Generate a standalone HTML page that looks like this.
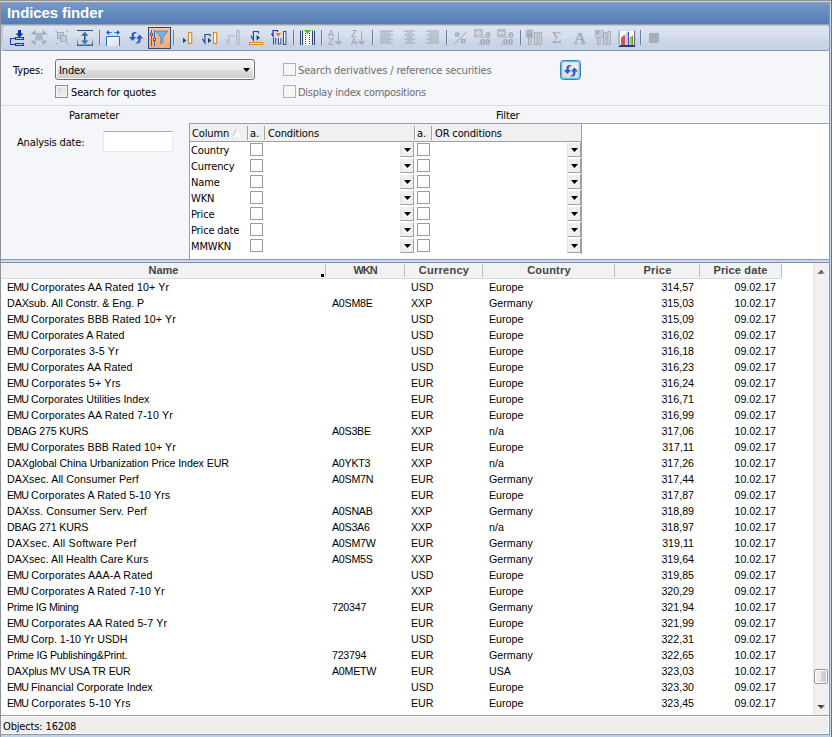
<!DOCTYPE html>
<html><head><meta charset="utf-8"><title>Indices finder</title>
<style>
html,body{margin:0;padding:0;}
body{width:832px;height:737px;overflow:hidden;position:relative;background:#c3d2e8;font-family:"DejaVu Sans Condensed","Liberation Sans",sans-serif;font-size:11px;color:#000;}
div,span,i{box-sizing:border-box;}
.abs{position:absolute;}
#frame-top0{left:0;top:0;width:832px;height:1px;background:#8f9398;}
#frame-top1{left:0;top:1px;width:832px;height:1px;background:#cbd4e2;}
#frame-top2{left:0;top:2px;width:832px;height:1px;background:#9a9ea5;}
#frame-left{left:0;top:2px;width:1px;height:735px;background:#8f9398;}
#title{left:1px;top:3px;width:829px;height:21px;background:linear-gradient(#7698c7,#537eb7);}
#title span{position:absolute;left:6px;top:1px;font:bold 15px/18px "Liberation Sans",sans-serif;color:#fff;white-space:nowrap;letter-spacing:-0.1px;}
#title-line{left:1px;top:24px;width:829px;height:1px;background:#9aa0aa;}
#tbwrap{left:1px;top:25px;width:829px;height:26px;background:linear-gradient(#b4c8e8,#bccde6);}
#toolbar{left:3px;top:26px;width:826px;height:25px;border-radius:3px;border-bottom:1px solid #8793a6;background:linear-gradient(#dfe5f0 0%,#d6deeb 45%,#cdd8e7 55%,#c4d1e4 100%);}
#form{left:1px;top:51px;width:829px;height:208px;background:#f5f6fa;}
.lbl{position:absolute;white-space:nowrap;line-height:13px;letter-spacing:-0.15px;font-family:"DejaVu Sans Condensed","DejaVu Sans","Liberation Sans",sans-serif;font-stretch:condensed;}
.dis{color:#6d6d6d;}
.cb{position:absolute;width:13px;height:13px;border:1px solid #8e8f8f;background:#f4f4f4;}
.cb i{position:absolute;left:1px;top:1px;width:9px;height:9px;border:1px solid #e9e9ea;background:linear-gradient(135deg,#d2d4d2,#f6f6f6);display:block;}
.cbd{position:absolute;width:13px;height:13px;border:1px solid #b1b1b1;background:#f6f6f6;}
.hline{position:absolute;height:1px;background:#d5dae4;}
#rows{left:1px;top:279px;width:813px;height:436px;background:#fff;font-family:"Liberation Sans",sans-serif;font-size:10.67px;}
.r{position:relative;height:16px;line-height:16px;white-space:nowrap;}
.r span{position:absolute;top:0;}
.c1{left:6px;}.c1 b{font-weight:normal;letter-spacing:-0.89px;}.c2{left:331px;letter-spacing:-0.25px;}.c3{left:410px;}.c4{left:488px;}
.c5{right:120px;}.c6{right:38px;}
.hd{position:absolute;top:263px;height:15px;background:#f1f2f4;font:bold 11px/15px "Liberation Sans",sans-serif;color:#444;text-align:center;}
.hd:after{content:"";position:absolute;right:0;top:1px;width:1px;height:13px;background:#bdbdbd;}
</style></head><body>
<div class="abs" id="frame-top0"></div><div class="abs" id="frame-top1"></div><div class="abs" id="frame-top2"></div>
<div class="abs" id="title"><span>Indices finder</span></div>
<div class="abs" id="title-line"></div>
<div class="abs" id="tbwrap"></div>
<div class="abs" id="toolbar"></div>
<div class="abs" id="form"></div>
<svg class="abs" style="left:0;top:25px" width="832" height="26" viewBox="0 25 832 26">
<defs><linearGradient id="og" x1="0" y1="0" x2="0" y2="1"><stop offset="0" stop-color="#f9c9a3"/><stop offset="1" stop-color="#f1a873"/></linearGradient><linearGradient id="wg" x1="0" y1="0" x2="1" y2="1"><stop offset="0" stop-color="#ffffff"/><stop offset="1" stop-color="#d4d9e4"/></linearGradient><linearGradient id="ag" x1="0" y1="0" x2="0" y2="1"><stop offset="0" stop-color="#4a8fc0"/><stop offset="0.5" stop-color="#24507f"/><stop offset="1" stop-color="#4a8fc0"/></linearGradient><linearGradient id="sg" x1="0" y1="0" x2="0" y2="1"><stop offset="0" stop-color="#c8daf4"/><stop offset="1" stop-color="#2c4c7c"/></linearGradient></defs>
<rect x="99" y="30" width="1" height="15" fill="#6b7b9b"/>
<rect x="100" y="30" width="1" height="15" fill="#e4eaf3" opacity="0.6"/>
<rect x="173" y="30" width="1" height="15" fill="#6b7b9b"/>
<rect x="174" y="30" width="1" height="15" fill="#e4eaf3" opacity="0.6"/>
<rect x="293" y="30" width="1" height="15" fill="#6b7b9b"/>
<rect x="294" y="30" width="1" height="15" fill="#e4eaf3" opacity="0.6"/>
<rect x="321" y="30" width="1" height="15" fill="#6b7b9b"/>
<rect x="322" y="30" width="1" height="15" fill="#e4eaf3" opacity="0.6"/>
<rect x="372" y="30" width="1" height="15" fill="#6b7b9b"/>
<rect x="373" y="30" width="1" height="15" fill="#e4eaf3" opacity="0.6"/>
<rect x="446" y="30" width="1" height="15" fill="#6b7b9b"/>
<rect x="447" y="30" width="1" height="15" fill="#e4eaf3" opacity="0.6"/>
<rect x="520" y="30" width="1" height="15" fill="#6b7b9b"/>
<rect x="521" y="30" width="1" height="15" fill="#e4eaf3" opacity="0.6"/>
<rect x="640" y="30" width="1" height="15" fill="#6b7b9b"/>
<rect x="641" y="30" width="1" height="15" fill="#e4eaf3" opacity="0.6"/>
<path d="M18 30h3v3.5h2.5L19.5 37.4L15.5 33.5H18z" fill="#0a32b4"/>
<path d="M15.5 38.5H10.5V44.5H15.5" fill="none" stroke="#0a32b4" stroke-width="1"/>
<rect x="15.5" y="37.5" width="8" height="2" fill="#a8d4fb" stroke="#0a3cc0" stroke-width="1"/>
<rect x="15.5" y="43.5" width="8" height="2" fill="#a8d4fb" stroke="#0a3cc0" stroke-width="1"/>
<rect x="35.3" y="32.8" width="7.4" height="7.6" fill="#b0b8c5"/>
<path d="M30.6 34.4L35.4 29.8v4.6zM42.6 29.8v4.6h4.8zM30.6 40.8h4.8v4.6zM42.6 40.8h4.8l-4.8 4.6z" fill="#9ea6b3"/>
<rect x="57.5" y="32.5" width="6" height="6" fill="#c3cad5" stroke="#a4acb9"/>
<rect x="60.5" y="35.5" width="6" height="6" fill="#c3cad5" stroke="#a4acb9"/>
<path d="M55.5 30.5l1.5 1.5M68 30.5l-1.5 1.5M55.5 44.5l1.5-1.5M68 44.5l-1.5-1.5" stroke="#a4acb9" stroke-width="1.2"/>
<rect x="77" y="30" width="16" height="1" fill="#2c4c7c"/>
<rect x="77" y="44.6" width="16" height="1.2" fill="#2c4c7c"/>
<rect x="77" y="37.5" width="1" height="8" fill="url(#sg)"/><rect x="92" y="37.5" width="1" height="8" fill="url(#sg)"/>
<path d="M84.8 31.4L88.4 35.8H85.6V40.6H88.4L84.8 44.4L81.2 40.6H84V35.8H81.2z" fill="url(#ag)"/>
<rect x="106.5" y="36.5" width="13" height="10" fill="url(#wg)" stroke="none"/>
<path d="M106.5 46V36.5H119.5V46" fill="none" stroke="#2a6cc8" stroke-width="1"/>
<path d="M106 32.5L109 30v2h2.5v1H109v2zM120 32.5L117 30v2h-2.5v1H117v2z" fill="#1f5fc0"/>
<path d="M129 37l3.6 4l3.6-4h-2.2v-2.2q0-1.6 1.8-1.6h0.6v-1.2h-1.4q-3.4 0-3.4 3v2z" fill="#2d5ccc"/><path d="M143.2 38.6l-3.6-4l-3.6 4h2.2v2.2q0 1.6-1.8 1.6h-0.6v1.2h1.4q3.4 0 3.4-3v-2z" fill="#2d5ccc"/>
<rect x="148.5" y="27.5" width="22" height="21" fill="url(#og)" stroke="#2f4a7a" stroke-width="1"/>
<rect x="151" y="30" width="1" height="16" fill="#2f6ad8"/><rect x="154" y="30" width="1" height="16" fill="#2f6ad8"/>
<rect x="150.5" y="33.5" width="2" height="2" fill="#fff" stroke="#2f6ad8"/>
<rect x="153.5" y="38.5" width="2" height="2" fill="#fff" stroke="#e8201a"/>
<path d="M155.5 31H168L163 37.2V42L160.8 44V37.2z" fill="#72b4ea" stroke="#3f79b0" stroke-width="0.7"/>
<path d="M183 37.7v5.5l3.3-2.75z" fill="#2a3f6a"/>
<rect x="188.5" y="32.5" width="3.2" height="11" fill="#fff" stroke="#e2851a" stroke-width="1.15"/>
<path d="M202.3 38.7l2.6 4.2V34.5H210v2" fill="none" stroke="#1f4f9f" stroke-width="1.2"/>
<path d="M208 37.8v5.5l3.3-2.75z" fill="#2a3f6a"/>
<rect x="213.5" y="32.5" width="3.2" height="11" fill="#fff" stroke="#e2851a" stroke-width="1.15"/>
<path d="M226.3 39.7l2.6 4.2V35.5H234v2" fill="none" stroke="#b4bcc8" stroke-width="1.2"/>
<rect x="236.5" y="30.5" width="2.6" height="14" fill="#cdd3dc" stroke="#b0b8c4"/>
<path d="M250.8 35.7l2.6 4.2V31.5H258.5v2" fill="none" stroke="#1f4f9f" stroke-width="1.2"/>
<path d="M256.6 35v5.5l3.3-2.75z" fill="#2a3f6a"/>
<rect x="249.5" y="42.5" width="13.2" height="2" fill="#fff" stroke="#e2851a" stroke-width="1.1"/>
<path d="M271.5 33.5l1.5 2.5V30.5h4.5v1.5" fill="none" stroke="#1a2fa0" stroke-width="1.2"/>
<path d="M275.6 33h5.6l-2.8 3.4z" fill="#e07818"/>
<rect x="273" y="38" width="1" height="6.5" fill="#2a4a8a"/><rect x="275.2" y="38" width="1" height="6.5" fill="#2a4a8a"/>
<path d="M278.5 38v6h2.4v-6" fill="#fff" stroke="#2a4a8a"/>
<rect x="283.5" y="31.5" width="2.4" height="13" fill="#fff" stroke="#2a4a8a"/>
<rect x="303.5" y="30" width="8" height="15" fill="#fff"/>
<rect x="300" y="30.5" width="1" height="14.5" fill="#2f446c"/>
<rect x="302" y="30.5" width="1" height="14.5" fill="#2f446c"/>
<rect x="312" y="30.5" width="1" height="14.5" fill="#2f446c"/>
<rect x="314" y="30.5" width="1" height="14.5" fill="#2f446c"/>
<path d="M305.5 33V45" stroke="#2f446c" stroke-width="1" stroke-dasharray="1 1"/>
<path d="M309.5 33V45" stroke="#2f446c" stroke-width="1" stroke-dasharray="1 1"/>
<path d="M303.5 30h8L307.5 34z" fill="#4cc21a"/>
<text x="330.8" y="36.6" font-family="Liberation Mono,monospace" font-size="10.5" fill="#9ca5b2" text-anchor="middle">A</text><text x="330.8" y="44.7" font-family="Liberation Mono,monospace" font-size="10.5" fill="#9ca5b2" text-anchor="middle">Z</text><path d="M338 31h1V41.2h3.4l-3.9 4l-3.9-4h3.4z" fill="#a4acb9"/>
<text x="353.8" y="36.6" font-family="Liberation Mono,monospace" font-size="10.5" fill="#9ca5b2" text-anchor="middle">Z</text><text x="353.8" y="44.7" font-family="Liberation Mono,monospace" font-size="10.5" fill="#9ca5b2" text-anchor="middle">A</text><path d="M361 31h1V41.2h3.4l-3.9 4l-3.9-4h3.4z" fill="#a4acb9"/>
<rect x="380" y="30.6" width="13" height="1" fill="#9fa8b5"/><rect x="380" y="32.6" width="10.5" height="1" fill="#9fa8b5"/><rect x="380" y="34.6" width="13" height="1" fill="#9fa8b5"/><rect x="380" y="36.6" width="10.5" height="1" fill="#9fa8b5"/><rect x="380" y="38.6" width="13" height="1" fill="#9fa8b5"/><rect x="380" y="40.6" width="10.5" height="1" fill="#9fa8b5"/><rect x="380" y="42.6" width="13" height="1" fill="#9fa8b5"/>
<rect x="404" y="30.6" width="11" height="1" fill="#9fa8b5"/><rect x="406.75" y="32.6" width="5.5" height="1" fill="#9fa8b5"/><rect x="404" y="34.6" width="11" height="1" fill="#9fa8b5"/><rect x="406.75" y="36.6" width="5.5" height="1" fill="#9fa8b5"/><rect x="404" y="38.6" width="11" height="1" fill="#9fa8b5"/><rect x="406.75" y="40.6" width="5.5" height="1" fill="#9fa8b5"/><rect x="404" y="42.6" width="11" height="1" fill="#9fa8b5"/>
<rect x="426" y="30.6" width="13" height="1" fill="#9fa8b5"/><rect x="429" y="32.6" width="10" height="1" fill="#9fa8b5"/><rect x="426" y="34.6" width="13" height="1" fill="#9fa8b5"/><rect x="429" y="36.6" width="10" height="1" fill="#9fa8b5"/><rect x="426" y="38.6" width="13" height="1" fill="#9fa8b5"/><rect x="429" y="40.6" width="10" height="1" fill="#9fa8b5"/><rect x="426" y="42.6" width="13" height="1" fill="#9fa8b5"/>
<path d="M454 44.3L466.6 32" stroke="#99a2af" stroke-width="1"/>
<rect x="455.8" y="33.2" width="2.8" height="2.8" fill="none" stroke="#9ca5b2" stroke-width="1.25"/>
<rect x="461.8" y="39.6" width="2.8" height="2.8" fill="none" stroke="#9ca5b2" stroke-width="1.25"/>
<rect x="474" y="29" width="9" height="8.4" fill="#b5bdc9"/><path d="M475.4 32.3h2.2v-2.2h1.8v2.2h2.2v1.8h-2.2v2.2h-1.8v-2.2h-2.2z" fill="#d4dae3"/><text x="482.6" y="37.6" font-family="Liberation Serif,serif" font-weight="bold" font-size="8.4" fill="#9aa3b0" textLength="7.6" lengthAdjust="spacingAndGlyphs">.0</text><text x="477.2" y="45.2" font-family="Liberation Serif,serif" font-weight="bold" font-size="8.4" fill="#9aa3b0" textLength="13" lengthAdjust="spacingAndGlyphs">.00</text>
<rect x="497" y="29" width="9" height="8.4" fill="#b5bdc9"/><rect x="498.5" y="32" width="6" height="2" fill="#d4dae3"/><text x="505.6" y="37.6" font-family="Liberation Serif,serif" font-weight="bold" font-size="8.4" fill="#9aa3b0" textLength="7.6" lengthAdjust="spacingAndGlyphs">.0</text><text x="500.2" y="45.2" font-family="Liberation Serif,serif" font-weight="bold" font-size="8.4" fill="#9aa3b0" textLength="13" lengthAdjust="spacingAndGlyphs">.00</text>
<rect x="525.5" y="29.5" width="8" height="8.5" fill="#bcc3ce"/>
<path d="M527.8 33.5v-1.6q0-1.6 1.7-1.6t1.7 1.6v1.6" fill="none" stroke="#a0a8b5" stroke-width="1.1"/>
<rect x="527" y="33.3" width="5" height="3.8" fill="#a0a8b5"/>
<rect x="528.5" y="38" width="2.6" height="6.5" fill="#ccd2dc" stroke="#a4acb9"/>
<rect x="534.5" y="32.5" width="2.6" height="12" fill="#ccd2dc" stroke="#a4acb9"/>
<rect x="539" y="32.5" width="2.6" height="12" fill="#ccd2dc" stroke="#a4acb9"/>
<text x="556.8" y="43.4" font-family="Liberation Serif,serif" font-size="16.5" fill="#a4acb9" text-anchor="middle" textLength="10" lengthAdjust="spacingAndGlyphs">Σ</text>
<text x="580" y="43.6" font-family="Liberation Serif,serif" font-weight="bold" font-size="17" fill="#a4acb9" text-anchor="middle" stroke="#a4acb9" stroke-width="0.3">A</text>
<rect x="594.8" y="29.8" width="9" height="8.4" fill="#b5bdc9"/>
<rect x="596" y="31" width="3" height="3" fill="#a4acb9"/><rect x="599.6" y="31" width="3" height="3" fill="#c9cfd9"/><rect x="596" y="34.6" width="6.6" height="2.6" fill="#c3cad5"/>
<rect x="597.5" y="38" width="2.6" height="6.5" fill="#ccd2dc" stroke="#a4acb9"/>
<rect x="603.5" y="32.5" width="2.6" height="12" fill="#ccd2dc" stroke="#a4acb9"/>
<rect x="607.8" y="31.5" width="2.6" height="13" fill="#ccd2dc" stroke="#a4acb9"/>
<rect x="618" y="30" width="17" height="17" fill="#fff"/>
<rect x="618" y="30" width="2" height="15.5" fill="#a9b6d6"/>
<path d="M618 47l2-2H635V47z" fill="#2c3f80"/>
<rect x="634.2" y="30.5" width="0.9" height="16" fill="#3a4a80"/>
<rect x="618" y="30" width="17" height="0.8" fill="#c5cfe4"/>
<path d="M621 37.5l3-2.5l1 0.5V45h-4z" fill="#d4524e"/><path d="M621 37.5l3-2.5l1 .5l-3 2.3z" fill="#e88a84"/>
<path d="M625.4 34l2.6-2.6l1 .6V45h-3.6z" fill="#bcc4ec"/><path d="M628 31.4l1 .6V45h-1z" fill="#3c52c4"/>
<path d="M629.4 38l2.6-2.5l1 .5V45h-3.6z" fill="#a9bc44"/><path d="M632 35.500l1 .5V45h-1z" fill="#7d8f1e"/>
<rect x="649" y="33" width="10" height="10" rx="0.8" fill="#a7afba"/>
</svg>
<div class="abs" style="left:560px;top:60px;width:21px;height:20px;border:1px solid #3c7fb1;border-radius:3.5px;background:linear-gradient(#f0eeee,#dcdcdc);box-shadow:inset 0 0 0 1.3px #46d0f4;"></div>
<svg class="abs" style="left:560px;top:60px" width="21" height="20" viewBox="560 60 21 20"><path d="M563.8 70l3.6 4l3.6-4h-2.2v-2.2q0-1.6 1.8-1.6h0.6v-1.2h-1.4q-3.4 0-3.4 3v2z" fill="#2d5ccc"/><path d="M578 71.6l-3.6-4l-3.6 4h2.2v2.2q0 1.6-1.8 1.6h-0.6v1.2h1.4q3.4 0 3.4-3v-2z" fill="#2d5ccc"/></svg>
<!-- form content -->
<div class="lbl" style="left:13px;top:64px;">Types:</div>
<div class="abs" id="sel" style="left:55px;top:59px;width:200px;height:21px;border:1px solid #707070;border-radius:3px;background:linear-gradient(#f2f2f2 0%,#ebebeb 50%,#dddddd 50%,#cfcfcf 100%);box-shadow:inset 0 0 0 1px #fcfcfc;"></div>
<div class="lbl" style="left:59px;top:64px;">Index</div>
<svg class="abs" style="left:243px;top:68px" width="7" height="4"><path d="M0 0h7L3.5 4z" fill="#000"/></svg>
<div class="cb" style="left:55px;top:85px;"><i></i></div>
<div class="lbl" style="left:71px;top:86px;">Search for quotes</div>
<div class="cbd" style="left:283px;top:63px;"></div>
<div class="lbl dis" style="left:298px;top:64px;">Search derivatives / reference securities</div>
<div class="cbd" style="left:283px;top:85px;"></div>
<div class="lbl dis" style="left:298px;top:86px;letter-spacing:-0.29px;">Display index compositions</div>
<div class="hline" style="left:1px;top:105px;width:829px;"></div>
<div class="lbl" style="left:69px;top:109px;">Parameter</div>
<div class="lbl" style="left:496px;top:109px;">Filter</div>
<div class="lbl" style="left:17px;top:136px;">Analysis date:</div>
<div class="abs" style="left:103px;top:131px;width:70px;height:21px;border:1px solid #e3e9ef;border-top-color:#abadb3;background:#fff;border-radius:1px;"></div>
<div class="abs" style="left:189px;top:123px;width:641px;height:136px;background:#fff;"></div>
<div class="abs" style="left:189px;top:123px;width:393px;height:136px;border:1px solid #a0a0a0;border-bottom:none;border-right:none;"></div>
<div class="abs" style="left:189px;top:123px;width:640px;height:1px;background:#a0a0a0;"></div>
<div class="abs" style="left:190px;top:124px;width:391px;height:17px;background:#f0f0f0;"></div>
<div class="abs" style="left:190px;top:141px;width:392px;height:1px;background:#a0a0a0;"></div>
<div class="abs" style="left:581px;top:123px;width:1px;height:131px;background:#a0a0a0;"></div>
<div class="abs" style="left:247px;top:126px;width:1px;height:14px;background:#a0a0a0;"></div>
<div class="abs" style="left:248px;top:126px;width:1px;height:14px;background:#fff;"></div>
<div class="abs" style="left:264px;top:126px;width:1px;height:14px;background:#a0a0a0;"></div>
<div class="abs" style="left:265px;top:126px;width:1px;height:14px;background:#fff;"></div>
<div class="abs" style="left:414px;top:126px;width:1px;height:14px;background:#a0a0a0;"></div>
<div class="abs" style="left:415px;top:126px;width:1px;height:14px;background:#fff;"></div>
<div class="abs" style="left:431px;top:126px;width:1px;height:14px;background:#a0a0a0;"></div>
<div class="abs" style="left:432px;top:126px;width:1px;height:14px;background:#fff;"></div>
<div class="lbl" style="left:192px;top:127px;">Column</div>
<svg class="abs" style="left:232px;top:129px" width="10" height="8"><path d="M0.5 7.5L4.5 0.5L8.5 7.5z" fill="#fdfdfd" stroke="#fff" stroke-width="1"/><path d="M0.5 7.5L4.5 0.5" fill="none" stroke="#b4b4b4" stroke-width="1"/></svg>
<div class="lbl" style="left:250px;top:127px;width:13px;overflow:hidden;">a.<span style="color:#c8c8c8">.</span></div>
<div class="lbl" style="left:268px;top:127px;">Conditions</div>
<div class="lbl" style="left:417px;top:127px;width:13px;overflow:hidden;">a.<span style="color:#c8c8c8">.</span></div>
<div class="lbl" style="left:435px;top:127px;">OR conditions</div>
<div class="lbl" style="left:191px;top:144px;">Country</div>
<div class="abs" style="left:250px;top:143px;width:13px;height:13px;border:1px solid #999a9a;background:#fff;"></div>
<div class="abs" style="left:417px;top:143px;width:13px;height:13px;border:1px solid #999a9a;background:#fff;"></div>
<div class="abs" style="left:400px;top:142px;width:14px;height:15px;background:#f0f0f0;border-left:1px solid #e3e3e3;border-top:1px solid #fff;border-right:1px solid #a0a0a0;border-bottom:1px solid #a0a0a0;"></div>
<svg class="abs" style="left:404px;top:148px" width="7" height="4"><path d="M0 0h7L3.5 4z" fill="#000"/></svg>
<div class="abs" style="left:567px;top:142px;width:14px;height:15px;background:#f0f0f0;border-left:1px solid #e3e3e3;border-top:1px solid #fff;border-right:1px solid #a0a0a0;border-bottom:1px solid #a0a0a0;"></div>
<svg class="abs" style="left:571px;top:148px" width="7" height="4"><path d="M0 0h7L3.5 4z" fill="#000"/></svg>
<div class="lbl" style="left:191px;top:160px;">Currency</div>
<div class="abs" style="left:250px;top:159px;width:13px;height:13px;border:1px solid #999a9a;background:#fff;"></div>
<div class="abs" style="left:417px;top:159px;width:13px;height:13px;border:1px solid #999a9a;background:#fff;"></div>
<div class="abs" style="left:400px;top:158px;width:14px;height:15px;background:#f0f0f0;border-left:1px solid #e3e3e3;border-top:1px solid #fff;border-right:1px solid #a0a0a0;border-bottom:1px solid #a0a0a0;"></div>
<svg class="abs" style="left:404px;top:164px" width="7" height="4"><path d="M0 0h7L3.5 4z" fill="#000"/></svg>
<div class="abs" style="left:567px;top:158px;width:14px;height:15px;background:#f0f0f0;border-left:1px solid #e3e3e3;border-top:1px solid #fff;border-right:1px solid #a0a0a0;border-bottom:1px solid #a0a0a0;"></div>
<svg class="abs" style="left:571px;top:164px" width="7" height="4"><path d="M0 0h7L3.5 4z" fill="#000"/></svg>
<div class="lbl" style="left:191px;top:176px;">Name</div>
<div class="abs" style="left:250px;top:175px;width:13px;height:13px;border:1px solid #999a9a;background:#fff;"></div>
<div class="abs" style="left:417px;top:175px;width:13px;height:13px;border:1px solid #999a9a;background:#fff;"></div>
<div class="abs" style="left:400px;top:174px;width:14px;height:15px;background:#f0f0f0;border-left:1px solid #e3e3e3;border-top:1px solid #fff;border-right:1px solid #a0a0a0;border-bottom:1px solid #a0a0a0;"></div>
<svg class="abs" style="left:404px;top:180px" width="7" height="4"><path d="M0 0h7L3.5 4z" fill="#000"/></svg>
<div class="abs" style="left:567px;top:174px;width:14px;height:15px;background:#f0f0f0;border-left:1px solid #e3e3e3;border-top:1px solid #fff;border-right:1px solid #a0a0a0;border-bottom:1px solid #a0a0a0;"></div>
<svg class="abs" style="left:571px;top:180px" width="7" height="4"><path d="M0 0h7L3.5 4z" fill="#000"/></svg>
<div class="lbl" style="left:191px;top:192px;">WKN</div>
<div class="abs" style="left:250px;top:191px;width:13px;height:13px;border:1px solid #999a9a;background:#fff;"></div>
<div class="abs" style="left:417px;top:191px;width:13px;height:13px;border:1px solid #999a9a;background:#fff;"></div>
<div class="abs" style="left:400px;top:190px;width:14px;height:15px;background:#f0f0f0;border-left:1px solid #e3e3e3;border-top:1px solid #fff;border-right:1px solid #a0a0a0;border-bottom:1px solid #a0a0a0;"></div>
<svg class="abs" style="left:404px;top:196px" width="7" height="4"><path d="M0 0h7L3.5 4z" fill="#000"/></svg>
<div class="abs" style="left:567px;top:190px;width:14px;height:15px;background:#f0f0f0;border-left:1px solid #e3e3e3;border-top:1px solid #fff;border-right:1px solid #a0a0a0;border-bottom:1px solid #a0a0a0;"></div>
<svg class="abs" style="left:571px;top:196px" width="7" height="4"><path d="M0 0h7L3.5 4z" fill="#000"/></svg>
<div class="lbl" style="left:191px;top:208px;">Price</div>
<div class="abs" style="left:250px;top:207px;width:13px;height:13px;border:1px solid #999a9a;background:#fff;"></div>
<div class="abs" style="left:417px;top:207px;width:13px;height:13px;border:1px solid #999a9a;background:#fff;"></div>
<div class="abs" style="left:400px;top:206px;width:14px;height:15px;background:#f0f0f0;border-left:1px solid #e3e3e3;border-top:1px solid #fff;border-right:1px solid #a0a0a0;border-bottom:1px solid #a0a0a0;"></div>
<svg class="abs" style="left:404px;top:212px" width="7" height="4"><path d="M0 0h7L3.5 4z" fill="#000"/></svg>
<div class="abs" style="left:567px;top:206px;width:14px;height:15px;background:#f0f0f0;border-left:1px solid #e3e3e3;border-top:1px solid #fff;border-right:1px solid #a0a0a0;border-bottom:1px solid #a0a0a0;"></div>
<svg class="abs" style="left:571px;top:212px" width="7" height="4"><path d="M0 0h7L3.5 4z" fill="#000"/></svg>
<div class="lbl" style="left:191px;top:224px;">Price date</div>
<div class="abs" style="left:250px;top:223px;width:13px;height:13px;border:1px solid #999a9a;background:#fff;"></div>
<div class="abs" style="left:417px;top:223px;width:13px;height:13px;border:1px solid #999a9a;background:#fff;"></div>
<div class="abs" style="left:400px;top:222px;width:14px;height:15px;background:#f0f0f0;border-left:1px solid #e3e3e3;border-top:1px solid #fff;border-right:1px solid #a0a0a0;border-bottom:1px solid #a0a0a0;"></div>
<svg class="abs" style="left:404px;top:228px" width="7" height="4"><path d="M0 0h7L3.5 4z" fill="#000"/></svg>
<div class="abs" style="left:567px;top:222px;width:14px;height:15px;background:#f0f0f0;border-left:1px solid #e3e3e3;border-top:1px solid #fff;border-right:1px solid #a0a0a0;border-bottom:1px solid #a0a0a0;"></div>
<svg class="abs" style="left:571px;top:228px" width="7" height="4"><path d="M0 0h7L3.5 4z" fill="#000"/></svg>
<div class="lbl" style="left:191px;top:240px;">MMWKN</div>
<div class="abs" style="left:250px;top:239px;width:13px;height:13px;border:1px solid #999a9a;background:#fff;"></div>
<div class="abs" style="left:417px;top:239px;width:13px;height:13px;border:1px solid #999a9a;background:#fff;"></div>
<div class="abs" style="left:400px;top:238px;width:14px;height:15px;background:#f0f0f0;border-left:1px solid #e3e3e3;border-top:1px solid #fff;border-right:1px solid #a0a0a0;border-bottom:1px solid #a0a0a0;"></div>
<svg class="abs" style="left:404px;top:244px" width="7" height="4"><path d="M0 0h7L3.5 4z" fill="#000"/></svg>
<div class="abs" style="left:567px;top:238px;width:14px;height:15px;background:#f0f0f0;border-left:1px solid #e3e3e3;border-top:1px solid #fff;border-right:1px solid #a0a0a0;border-bottom:1px solid #a0a0a0;"></div>
<svg class="abs" style="left:571px;top:244px" width="7" height="4"><path d="M0 0h7L3.5 4z" fill="#000"/></svg>
<!-- splitter -->
<div class="abs" style="left:1px;top:259px;width:829px;height:1px;background:#8c98ad;"></div>
<div class="abs" style="left:1px;top:260px;width:829px;height:2px;background:#cbd9ec;"></div>
<div class="abs" style="left:1px;top:262px;width:829px;height:1px;background:#8291a8;"></div>
<!-- grid -->
<div class="abs" style="left:1px;top:263px;width:813px;height:16px;background:#fff;"></div>
<div class="abs" style="left:1px;top:278px;width:781px;height:1px;background:#d9d9d9;"></div>
<div class="hd" style="left:1px;width:325px;">Name</div>
<div class="hd" style="left:326px;width:79px;letter-spacing:-1.1px;text-indent:-1px;">WKN</div>
<div class="hd" style="left:405px;width:78px;letter-spacing:0.26px;">Currency</div>
<div class="hd" style="left:483px;width:132px;letter-spacing:0.22px;">Country</div>
<div class="hd" style="left:615px;width:85px;letter-spacing:0.25px;">Price</div>
<div class="hd" style="left:700px;width:82px;letter-spacing:0.15px;text-indent:-1px;">Price date</div>
<div class="abs" style="left:320px;top:273px;width:4px;height:4px;background:#fff;"></div><div class="abs" style="left:321px;top:274px;width:3px;height:3px;background:#000;"></div>
<div class="abs" id="rows">
<div class="r"><span class="c1" style="letter-spacing:0.137px"><b>EMU</b> Corporates AA Rated 10+ Yr</span><span class="c2"></span><span class="c3">USD</span><span class="c4">Europe</span><span class="c5">314,57</span><span class="c6">09.02.17</span></div>
<div class="r"><span class="c1" style="letter-spacing:-0.034px">DAXsub. All Constr. &amp; Eng. P</span><span class="c2">A0SM8E</span><span class="c3">XXP</span><span class="c4">Germany</span><span class="c5">315,03</span><span class="c6">10.02.17</span></div>
<div class="r"><span class="c1" style="letter-spacing:0.069px"><b>EMU</b> Corporates BBB Rated 10+ Yr</span><span class="c2"></span><span class="c3">USD</span><span class="c4">Europe</span><span class="c5">315,09</span><span class="c6">09.02.17</span></div>
<div class="r"><span class="c1" style="letter-spacing:0.023px"><b>EMU</b> Corporates A Rated</span><span class="c2"></span><span class="c3">USD</span><span class="c4">Europe</span><span class="c5">316,02</span><span class="c6">09.02.17</span></div>
<div class="r"><span class="c1" style="letter-spacing:0.189px"><b>EMU</b> Corporates 3-5 Yr</span><span class="c2"></span><span class="c3">USD</span><span class="c4">Europe</span><span class="c5">316,18</span><span class="c6">09.02.17</span></div>
<div class="r"><span class="c1" style="letter-spacing:0.069px"><b>EMU</b> Corporates AA Rated</span><span class="c2"></span><span class="c3">USD</span><span class="c4">Europe</span><span class="c5">316,23</span><span class="c6">09.02.17</span></div>
<div class="r"><span class="c1" style="letter-spacing:0.185px"><b>EMU</b> Corporates 5+ Yrs</span><span class="c2"></span><span class="c3">EUR</span><span class="c4">Europe</span><span class="c5">316,24</span><span class="c6">09.02.17</span></div>
<div class="r"><span class="c1" style="letter-spacing:-0.024px"><b>EMU</b> Corporates Utilities Index</span><span class="c2"></span><span class="c3">EUR</span><span class="c4">Europe</span><span class="c5">316,71</span><span class="c6">09.02.17</span></div>
<div class="r"><span class="c1" style="letter-spacing:0.144px"><b>EMU</b> Corporates AA Rated 7-10 Yr</span><span class="c2"></span><span class="c3">EUR</span><span class="c4">Europe</span><span class="c5">316,99</span><span class="c6">09.02.17</span></div>
<div class="r"><span class="c1" style="letter-spacing:-0.185px">DBAG 275 KURS</span><span class="c2">A0S3BE</span><span class="c3">XXP</span><span class="c4">n/a</span><span class="c5">317,06</span><span class="c6">10.02.17</span></div>
<div class="r"><span class="c1" style="letter-spacing:0.072px"><b>EMU</b> Corporates BBB Rated 10+ Yr</span><span class="c2"></span><span class="c3">EUR</span><span class="c4">Europe</span><span class="c5">317,11</span><span class="c6">09.02.17</span></div>
<div class="r"><span class="c1" style="letter-spacing:-0.085px">DAXglobal China Urbanization Price Index EUR</span><span class="c2">A0YKT3</span><span class="c3">XXP</span><span class="c4">n/a</span><span class="c5">317,26</span><span class="c6">10.02.17</span></div>
<div class="r"><span class="c1" style="letter-spacing:0.056px">DAXsec. All Consumer Perf</span><span class="c2">A0SM7N</span><span class="c3">EUR</span><span class="c4">Germany</span><span class="c5">317,44</span><span class="c6">10.02.17</span></div>
<div class="r"><span class="c1" style="letter-spacing:0.117px"><b>EMU</b> Corporates A Rated 5-10 Yrs</span><span class="c2"></span><span class="c3">EUR</span><span class="c4">Europe</span><span class="c5">317,87</span><span class="c6">09.02.17</span></div>
<div class="r"><span class="c1" style="letter-spacing:0.104px">DAXss. Consumer Serv. Perf</span><span class="c2">A0SNAB</span><span class="c3">XXP</span><span class="c4">Germany</span><span class="c5">318,89</span><span class="c6">10.02.17</span></div>
<div class="r"><span class="c1" style="letter-spacing:-0.185px">DBAG 271 KURS</span><span class="c2">A0S3A6</span><span class="c3">XXP</span><span class="c4">n/a</span><span class="c5">318,97</span><span class="c6">10.02.17</span></div>
<div class="r"><span class="c1" style="letter-spacing:0.248px">DAXsec. All Software Perf</span><span class="c2">A0SM7W</span><span class="c3">EUR</span><span class="c4">Germany</span><span class="c5">319,11</span><span class="c6">10.02.17</span></div>
<div class="r"><span class="c1" style="letter-spacing:0.034px">DAXsec. All Health Care Kurs</span><span class="c2">A0SM5S</span><span class="c3">XXP</span><span class="c4">Germany</span><span class="c5">319,64</span><span class="c6">10.02.17</span></div>
<div class="r"><span class="c1" style="letter-spacing:0.161px"><b>EMU</b> Corporates AAA-A Rated</span><span class="c2"></span><span class="c3">USD</span><span class="c4">Europe</span><span class="c5">319,85</span><span class="c6">09.02.17</span></div>
<div class="r"><span class="c1" style="letter-spacing:0.111px"><b>EMU</b> Corporates A Rated 7-10 Yr</span><span class="c2"></span><span class="c3">XXP</span><span class="c4">Europe</span><span class="c5">320,29</span><span class="c6">09.02.17</span></div>
<div class="r"><span class="c1" style="letter-spacing:-0.339px">Prime IG Mining</span><span class="c2">720347</span><span class="c3">EUR</span><span class="c4">Germany</span><span class="c5">321,94</span><span class="c6">10.02.17</span></div>
<div class="r"><span class="c1" style="letter-spacing:0.162px"><b>EMU</b> Corporates AA Rated 5-7 Yr</span><span class="c2"></span><span class="c3">EUR</span><span class="c4">Europe</span><span class="c5">321,99</span><span class="c6">09.02.17</span></div>
<div class="r"><span class="c1" style="letter-spacing:-0.028px"><b>EMU</b> Corp. 1-10 Yr USDH</span><span class="c2"></span><span class="c3">USD</span><span class="c4">Europe</span><span class="c5">322,31</span><span class="c6">09.02.17</span></div>
<div class="r"><span class="c1" style="letter-spacing:-0.23px">Prime IG Publishing&amp;Print.</span><span class="c2">723794</span><span class="c3">EUR</span><span class="c4">Germany</span><span class="c5">322,65</span><span class="c6">10.02.17</span></div>
<div class="r"><span class="c1" style="letter-spacing:-0.166px">DAXplus MV USA TR EUR</span><span class="c2">A0METW</span><span class="c3">EUR</span><span class="c4">USA</span><span class="c5">323,03</span><span class="c6">10.02.17</span></div>
<div class="r"><span class="c1" style="letter-spacing:-0.012px"><b>EMU</b> Financial Corporate Index</span><span class="c2"></span><span class="c3">USD</span><span class="c4">Europe</span><span class="c5">323,30</span><span class="c6">09.02.17</span></div>
<div class="r"><span class="c1" style="letter-spacing:0.198px"><b>EMU</b> Corporates 5-10 Yrs</span><span class="c2"></span><span class="c3">EUR</span><span class="c4">Europe</span><span class="c5">323,45</span><span class="c6">09.02.17</span></div>
</div>
<!-- scrollbar -->
<div class="abs" style="left:813px;top:263px;width:16px;height:452px;background:linear-gradient(90deg,#e8e8e8,#f0f0f0 2px,#f0f0f0);"></div>
<svg class="abs" style="left:817px;top:269px" width="9" height="6"><defs><linearGradient id="sa" x1="0" y1="0" x2="1" y2="0.6"><stop offset="0.2" stop-color="#202020"/><stop offset="1" stop-color="#a8a8a8"/></linearGradient></defs><path d="M0.6 5L4.4 0.8L8.2 5z" fill="url(#sa)"/></svg>
<svg class="abs" style="left:817px;top:704px" width="9" height="6"><path d="M0.6 1L4.4 5.2L8.2 1z" fill="url(#sa)"/></svg>
<div class="abs" style="left:814px;top:669px;width:14px;height:15px;border:1px solid #979797;border-radius:2px;background:linear-gradient(90deg,#f3f3f3 0%,#e9e9ea 50%,#d6d6d8 50%,#c5c5c8 100%);box-shadow:inset 0 0 0 1px #fff;"></div>
<!-- status -->
<div class="abs" style="left:1px;top:715px;width:829px;height:1px;background:#a0a0a0;"></div>
<div class="abs" style="left:1px;top:716px;width:828px;height:18px;background:#f0eded;border:1px solid #fff;"></div>
<div class="lbl" style="left:3px;top:720px;">Objects: 16208</div>
<div class="abs" style="left:0px;top:734px;width:831px;height:1px;background:#8c98ad;"></div>
<div class="abs" style="left:0px;top:735px;width:832px;height:2px;background:#c0d0e6;"></div>
<!-- right frame -->
<div class="abs" style="left:829px;top:3px;width:1px;height:732px;background:#8c98ad;"></div>
<div class="abs" style="left:830px;top:1px;width:1px;height:736px;background:#c5d5ea;"></div><div class="abs" style="left:831px;top:0px;width:1px;height:737px;background:#66748a;"></div>
<div class="abs" id="frame-left"></div>
</body></html>
